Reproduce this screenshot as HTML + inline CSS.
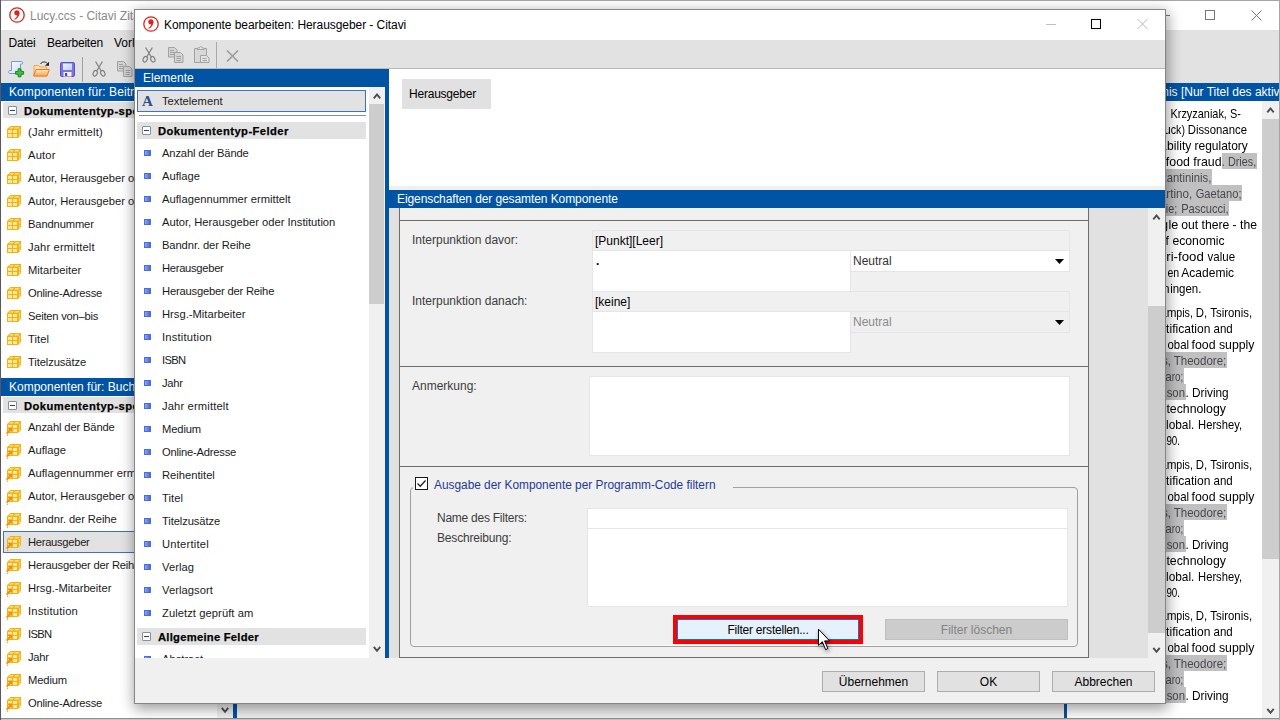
<!DOCTYPE html>
<html lang="de"><head><meta charset="utf-8"><title>Komponente bearbeiten: Herausgeber - Citavi</title>
<style>
html,body{margin:0;padding:0;}
body{width:1280px;height:720px;overflow:hidden;position:relative;background:#a6a6a6;font-family:"Liberation Sans",sans-serif;font-size:12px;color:#000;}
div,span{box-sizing:border-box;}
.a{position:absolute;white-space:nowrap;}
.t{position:absolute;white-space:nowrap;line-height:16px;height:16px;font-size:12px;}
.li{position:absolute;white-space:nowrap;font-size:11.200px;line-height:14px;height:14px;color:#1a1a1a;}
.gh{position:absolute;white-space:nowrap;font-size:11.200px;letter-spacing:.45px;font-weight:bold;line-height:14px;height:14px;color:#000;-webkit-text-stroke:.25px #000;}
.hd{position:absolute;background:#0054a3;color:#fff;font-size:12px;line-height:18px;height:18px;white-space:nowrap;overflow:hidden;}
.btn{position:absolute;border:1px solid #adadad;background:#e1e1e1;text-align:center;font-size:12px;line-height:21px;height:21px;}
.sq{position:absolute;width:7px;height:6px;background:linear-gradient(90deg,#8fa6f2,#4668dc);border:1px solid #4a6ce0;}
.exp{position:absolute;width:9px;height:9px;border:1px solid #8e8e9a;border-radius:1px;background:#fff;}
.exp i{position:absolute;left:1px;top:3px;width:5px;height:1px;background:#1c3fa0;}
</style></head><body>

<div class="a" style="left:0;top:0;width:1280px;height:1px;background:#a6a6a6"></div>
<div class="a" style="left:0;top:718px;width:1280px;height:1px;background:#8f8f8f"></div>
<div class="a" style="left:0;top:719px;width:1280px;height:1px;background:#c8c8c8"></div>
<div class="a" style="left:0;top:0;width:1px;height:720px;background:#5a5560"></div>
<div class="a" style="left:1279px;top:0;width:1px;height:720px;background:#a6a6a6"></div>
<div id="main" class="a" style="left:1px;top:1px;width:1278px;height:717px;background:#f0f0f0;overflow:hidden">
<div class="a" style="left:0;top:0;width:1278px;height:29px;background:#fff"></div>
<svg class="a" style="left:8px;top:6px" width="16" height="16" viewBox="0 0 16 16"><circle cx="8" cy="8" r="7.200" fill="#fff" stroke="#d9261c" stroke-width="1.300"/><circle cx="7.900" cy="5.800" r="2.600" fill="#d9261c"/><path d="M10.500 5.800C10.600 9.200 8.400 11.700 5.600 12.800L5.200 12.100C6.800 11.200 7.900 10 8.200 8.300Z" fill="#d9261c"/></svg>
<div class="t" style="left:29px;top:7px;font-size:12px;color:#8a8a8a">Lucy.ccs - Citavi Zitationsstil-Editor</div>
<svg class="a" style="left:1195px;top:4px" width="80" height="20" viewBox="0 0 80 20"><rect x="9.500" y="5.500" width="9" height="9" fill="none" stroke="#777" stroke-width="1"/><path d="M55.500 5.500l10 10M65.500 5.500l-10 10" stroke="#777" stroke-width="1" fill="none"/></svg>
<div class="a" style="left:1159px;top:14px;width:10px;height:1px;background:#777"></div>
<div class="a" style="left:0;top:29px;width:1278px;height:53px;background:#e2e2e2"></div>
<div class="t" style="left:7.500px;top:34px;letter-spacing:-.2px">Datei</div>
<div class="t" style="left:46px;top:34px;letter-spacing:-.22px">Bearbeiten</div>
<div class="t" style="left:113px;top:34px;">Vorlagen</div>
<svg class="a" style="left:6px;top:59px" width="18" height="18" viewBox="0 0 18 18"><defs><linearGradient id="gd" x1="0" y1="0" x2="1" y2="1"><stop offset="0" stop-color="#ffffff"/><stop offset="1" stop-color="#c4d8f6"/></linearGradient></defs><path d="M4.500 1.500H14.500c1.600 0 1.600 2.600 0 2.600H13.500V13.500H3c-2 0-2-3 0-3H4.500Z" fill="url(#gd)" stroke="#7d98c8" stroke-width="1"/><path d="M11.200 8.800h2.800v2.600h2.600v2.800h-2.600v2.600h-2.800v-2.600h-2.600v-2.800h2.600z" fill="#3ec43e" stroke="#0b7a12" stroke-width=".9"/></svg><svg class="a" style="left:31px;top:59px" width="19" height="18" viewBox="0 0 19 18"><defs><linearGradient id="gf" x1="0" y1="0" x2="0" y2="1"><stop offset="0" stop-color="#ffe6c0"/><stop offset="1" stop-color="#ffa848"/></linearGradient></defs><path d="M2 5.500h4.500l1.500 1.500h6.500v9h-12.500z" fill="#ffe2b8" stroke="#f6a040" stroke-width="1"/><path d="M1.700 16l2.300-6.500h13.300l-2.300 6.500z" fill="url(#gf)" stroke="#f0782c" stroke-width="1"/><path d="M8.500 4c1.500-2.600 5-2.800 7-.3" fill="none" stroke="#2a2a2a" stroke-width="1"/><path d="M17 1.800v4h-4z" fill="#1a1a1a"/></svg><svg class="a" style="left:57px;top:59px" width="18" height="18" viewBox="0 0 18 18"><defs><linearGradient id="gs" x1="0" y1="0" x2="1" y2="1"><stop offset="0" stop-color="#eef6ff"/><stop offset="1" stop-color="#b8d0f2"/></linearGradient></defs><rect x="2.500" y="2.500" width="14" height="14" rx="1.200" fill="#7c74e2" stroke="#5b50c6" stroke-width="1"/><rect x="5" y="3.500" width="9" height="6.500" fill="url(#gs)"/><rect x="5.500" y="12" width="8" height="4.500" fill="#f2f2f8"/><rect x="7" y="13" width="2.200" height="3" fill="#4a44a8"/></svg><div class="a" style="left:81px;top:56px;width:1px;height:25px;background:#a0a0a0"></div><svg class="a" style="left:91px;top:60px" width="14" height="16" viewBox="0 0 14 16"><path d="M3.600 0.500L9.400 10.200M10.400 0.500L4.600 10.200" stroke="#828282" stroke-width="1.250" fill="none"/><ellipse cx="3.200" cy="12.300" rx="2" ry="2.900" transform="rotate(24 3.200 12.300)" fill="none" stroke="#828282" stroke-width="1.250"/><ellipse cx="10.800" cy="12.300" rx="2" ry="2.900" transform="rotate(-24 10.800 12.300)" fill="none" stroke="#828282" stroke-width="1.250"/></svg><svg class="a" style="left:115px;top:59px" width="18" height="18" viewBox="0 0 18 18"><path d="M1.500 1.500h6l2.500 2.500v7h-8.500z" fill="#d4d4d4" stroke="#a2a2a2" stroke-width="1"/><path d="M3 4.500h4M3 6.500h5M3 8.500h5" stroke="#a2a2a2" stroke-width="1"/><path d="M7.500 6.500h6l2.500 2.500v7.500h-8.500z" fill="#d4d4d4" stroke="#a2a2a2" stroke-width="1"/><path d="M9.500 10.500h4.500M9.500 12.500h4.500M9.500 14.500h4.500" stroke="#a2a2a2" stroke-width="1"/></svg>
<div class="hd" style="left:0;top:82px;width:232px;padding-left:8px;letter-spacing:.08px">Komponenten für: Beitrag in ...</div>
<div class="a" style="left:0;top:100px;width:232px;height:617px;background:#fff"></div>
<div class="a" style="left:2px;top:101px;width:214px;height:16px;background:#e2e2e2"></div><div class="exp" style="left:7px;top:105px"><i></i></div><div class="gh" style="left:23px;top:103px">Dokumententyp-spezifische Felder</div><svg class="a" style="left:5px;top:124px" width="16" height="16" viewBox="0 0 16 16"><path d="M1 4.300L4.300 1H15V10L12 13H1Z" fill="#f2b30e"/><path d="M2 5h4v3h-4zM7 5h4v3h-4zM2 9h4v3h-4zM7 9h4v3h-4z" fill="#fde7a4"/><path d="M4.200 2.200H7.900L6.700 3.500H3ZM9.200 2.200H13.600L12.400 3.500H8Z" fill="#fde7a4"/><path d="M12.900 4.700L14.200 3.300V6.600L12.900 8ZM12.900 9L14.200 7.600V10L12.900 11.400Z" fill="#fbd873"/></svg><div class="li" style="left:27px;top:124px;letter-spacing:0.169px">(Jahr ermittelt)</div><svg class="a" style="left:5px;top:147px" width="16" height="16" viewBox="0 0 16 16"><path d="M1 4.300L4.300 1H15V10L12 13H1Z" fill="#f2b30e"/><path d="M2 5h4v3h-4zM7 5h4v3h-4zM2 9h4v3h-4zM7 9h4v3h-4z" fill="#fde7a4"/><path d="M4.200 2.200H7.900L6.700 3.500H3ZM9.200 2.200H13.600L12.400 3.500H8Z" fill="#fde7a4"/><path d="M12.900 4.700L14.200 3.300V6.600L12.900 8ZM12.900 9L14.200 7.600V10L12.900 11.400Z" fill="#fbd873"/></svg><div class="li" style="left:27px;top:147px;letter-spacing:0.166px">Autor</div><svg class="a" style="left:5px;top:170px" width="16" height="16" viewBox="0 0 16 16"><path d="M1 4.300L4.300 1H15V10L12 13H1Z" fill="#f2b30e"/><path d="M2 5h4v3h-4zM7 5h4v3h-4zM2 9h4v3h-4zM7 9h4v3h-4z" fill="#fde7a4"/><path d="M4.200 2.200H7.900L6.700 3.500H3ZM9.200 2.200H13.600L12.400 3.500H8Z" fill="#fde7a4"/><path d="M12.900 4.700L14.200 3.300V6.600L12.900 8ZM12.900 9L14.200 7.600V10L12.900 11.400Z" fill="#fbd873"/></svg><div class="li" style="left:27px;top:170px;letter-spacing:-0.006px">Autor, Herausgeber oder Institution</div><svg class="a" style="left:5px;top:193px" width="16" height="16" viewBox="0 0 16 16"><path d="M1 4.300L4.300 1H15V10L12 13H1Z" fill="#f2b30e"/><path d="M2 5h4v3h-4zM7 5h4v3h-4zM2 9h4v3h-4zM7 9h4v3h-4z" fill="#fde7a4"/><path d="M4.200 2.200H7.900L6.700 3.500H3ZM9.200 2.200H13.600L12.400 3.500H8Z" fill="#fde7a4"/><path d="M12.900 4.700L14.200 3.300V6.600L12.900 8ZM12.900 9L14.200 7.600V10L12.900 11.400Z" fill="#fbd873"/></svg><div class="li" style="left:27px;top:193px;letter-spacing:-0.006px">Autor, Herausgeber oder Institution</div><svg class="a" style="left:5px;top:216px" width="16" height="16" viewBox="0 0 16 16"><path d="M1 4.300L4.300 1H15V10L12 13H1Z" fill="#f2b30e"/><path d="M2 5h4v3h-4zM7 5h4v3h-4zM2 9h4v3h-4zM7 9h4v3h-4z" fill="#fde7a4"/><path d="M4.200 2.200H7.900L6.700 3.500H3ZM9.200 2.200H13.600L12.400 3.500H8Z" fill="#fde7a4"/><path d="M12.900 4.700L14.200 3.300V6.600L12.900 8ZM12.900 9L14.200 7.600V10L12.900 11.400Z" fill="#fbd873"/></svg><div class="li" style="left:27px;top:216px;letter-spacing:-0.144px">Bandnummer</div><svg class="a" style="left:5px;top:239px" width="16" height="16" viewBox="0 0 16 16"><path d="M1 4.300L4.300 1H15V10L12 13H1Z" fill="#f2b30e"/><path d="M2 5h4v3h-4zM7 5h4v3h-4zM2 9h4v3h-4zM7 9h4v3h-4z" fill="#fde7a4"/><path d="M4.200 2.200H7.900L6.700 3.500H3ZM9.200 2.200H13.600L12.400 3.500H8Z" fill="#fde7a4"/><path d="M12.900 4.700L14.200 3.300V6.600L12.900 8ZM12.900 9L14.200 7.600V10L12.900 11.400Z" fill="#fbd873"/></svg><div class="li" style="left:27px;top:239px;letter-spacing:0.147px">Jahr ermittelt</div><svg class="a" style="left:5px;top:262px" width="16" height="16" viewBox="0 0 16 16"><path d="M1 4.300L4.300 1H15V10L12 13H1Z" fill="#f2b30e"/><path d="M2 5h4v3h-4zM7 5h4v3h-4zM2 9h4v3h-4zM7 9h4v3h-4z" fill="#fde7a4"/><path d="M4.200 2.200H7.900L6.700 3.500H3ZM9.200 2.200H13.600L12.400 3.500H8Z" fill="#fde7a4"/><path d="M12.900 4.700L14.200 3.300V6.600L12.900 8ZM12.900 9L14.200 7.600V10L12.900 11.400Z" fill="#fbd873"/></svg><div class="li" style="left:27px;top:262px;letter-spacing:0.035px">Mitarbeiter</div><svg class="a" style="left:5px;top:285px" width="16" height="16" viewBox="0 0 16 16"><path d="M1 4.300L4.300 1H15V10L12 13H1Z" fill="#f2b30e"/><path d="M2 5h4v3h-4zM7 5h4v3h-4zM2 9h4v3h-4zM7 9h4v3h-4z" fill="#fde7a4"/><path d="M4.200 2.200H7.900L6.700 3.500H3ZM9.200 2.200H13.600L12.400 3.500H8Z" fill="#fde7a4"/><path d="M12.900 4.700L14.200 3.300V6.600L12.900 8ZM12.900 9L14.200 7.600V10L12.900 11.400Z" fill="#fbd873"/></svg><div class="li" style="left:27px;top:285px;letter-spacing:-0.214px">Online-Adresse</div><svg class="a" style="left:5px;top:308px" width="16" height="16" viewBox="0 0 16 16"><path d="M1 4.300L4.300 1H15V10L12 13H1Z" fill="#f2b30e"/><path d="M2 5h4v3h-4zM7 5h4v3h-4zM2 9h4v3h-4zM7 9h4v3h-4z" fill="#fde7a4"/><path d="M4.200 2.200H7.900L6.700 3.500H3ZM9.200 2.200H13.600L12.400 3.500H8Z" fill="#fde7a4"/><path d="M12.900 4.700L14.200 3.300V6.600L12.900 8ZM12.900 9L14.200 7.600V10L12.900 11.400Z" fill="#fbd873"/></svg><div class="li" style="left:27px;top:308px;letter-spacing:-0.227px">Seiten von–bis</div><svg class="a" style="left:5px;top:331px" width="16" height="16" viewBox="0 0 16 16"><path d="M1 4.300L4.300 1H15V10L12 13H1Z" fill="#f2b30e"/><path d="M2 5h4v3h-4zM7 5h4v3h-4zM2 9h4v3h-4zM7 9h4v3h-4z" fill="#fde7a4"/><path d="M4.200 2.200H7.900L6.700 3.500H3ZM9.200 2.200H13.600L12.400 3.500H8Z" fill="#fde7a4"/><path d="M12.900 4.700L14.200 3.300V6.600L12.900 8ZM12.900 9L14.200 7.600V10L12.900 11.400Z" fill="#fbd873"/></svg><div class="li" style="left:27px;top:331px;letter-spacing:0.071px">Titel</div><svg class="a" style="left:5px;top:354px" width="16" height="16" viewBox="0 0 16 16"><path d="M1 4.300L4.300 1H15V10L12 13H1Z" fill="#f2b30e"/><path d="M2 5h4v3h-4zM7 5h4v3h-4zM2 9h4v3h-4zM7 9h4v3h-4z" fill="#fde7a4"/><path d="M4.200 2.200H7.900L6.700 3.500H3ZM9.200 2.200H13.600L12.400 3.500H8Z" fill="#fde7a4"/><path d="M12.900 4.700L14.200 3.300V6.600L12.900 8ZM12.900 9L14.200 7.600V10L12.900 11.400Z" fill="#fbd873"/></svg><div class="li" style="left:27px;top:354px;letter-spacing:-0.096px">Titelzusätze</div><div class="hd" style="left:0;top:377px;width:232px;padding-left:8px">Komponenten für: Buch (Sammelwerk)</div><div class="a" style="left:2px;top:396px;width:214px;height:16px;background:#e2e2e2"></div><div class="exp" style="left:7px;top:400px"><i></i></div><div class="gh" style="left:23px;top:398px">Dokumententyp-spezifische Felder</div><svg class="a" style="left:5px;top:419px" width="16" height="16" viewBox="0 0 16 16"><path d="M1 4.300L4.300 1H15V10L12 13H1Z" fill="#f2b30e"/><path d="M2 5h4v3h-4zM7 5h4v3h-4zM2 9h4v3h-4zM7 9h4v3h-4z" fill="#fde7a4"/><path d="M4.200 2.200H7.900L6.700 3.500H3ZM9.200 2.200H13.600L12.400 3.500H8Z" fill="#fde7a4"/><path d="M12.900 4.700L14.200 3.300V6.600L12.900 8ZM12.900 9L14.200 7.600V10L12.900 11.400Z" fill="#fbd873"/><path d="M1.500 7.500H6V12L4.700 10.800L1.300 14.300L0 13L3.200 9.400Z" fill="#ff8a00"/><rect x="1" y="14.600" width="1.200" height="1.200" fill="#ff8a00"/></svg><div class="li" style="left:27px;top:419px;letter-spacing:-0.141px">Anzahl der Bände</div><svg class="a" style="left:5px;top:442px" width="16" height="16" viewBox="0 0 16 16"><path d="M1 4.300L4.300 1H15V10L12 13H1Z" fill="#f2b30e"/><path d="M2 5h4v3h-4zM7 5h4v3h-4zM2 9h4v3h-4zM7 9h4v3h-4z" fill="#fde7a4"/><path d="M4.200 2.200H7.900L6.700 3.500H3ZM9.200 2.200H13.600L12.400 3.500H8Z" fill="#fde7a4"/><path d="M12.900 4.700L14.200 3.300V6.600L12.900 8ZM12.900 9L14.200 7.600V10L12.900 11.400Z" fill="#fbd873"/><path d="M1.500 7.500H6V12L4.700 10.800L1.300 14.300L0 13L3.200 9.400Z" fill="#ff8a00"/><rect x="1" y="14.600" width="1.200" height="1.200" fill="#ff8a00"/></svg><div class="li" style="left:27px;top:442px;letter-spacing:0.001px">Auflage</div><svg class="a" style="left:5px;top:465px" width="16" height="16" viewBox="0 0 16 16"><path d="M1 4.300L4.300 1H15V10L12 13H1Z" fill="#f2b30e"/><path d="M2 5h4v3h-4zM7 5h4v3h-4zM2 9h4v3h-4zM7 9h4v3h-4z" fill="#fde7a4"/><path d="M4.200 2.200H7.900L6.700 3.500H3ZM9.200 2.200H13.600L12.400 3.500H8Z" fill="#fde7a4"/><path d="M12.900 4.700L14.200 3.300V6.600L12.900 8ZM12.900 9L14.200 7.600V10L12.900 11.400Z" fill="#fbd873"/><path d="M1.500 7.500H6V12L4.700 10.800L1.300 14.300L0 13L3.200 9.400Z" fill="#ff8a00"/><rect x="1" y="14.600" width="1.200" height="1.200" fill="#ff8a00"/></svg><div class="li" style="left:27px;top:465px;letter-spacing:0.027px">Auflagennummer ermittelt</div><svg class="a" style="left:5px;top:488px" width="16" height="16" viewBox="0 0 16 16"><path d="M1 4.300L4.300 1H15V10L12 13H1Z" fill="#f2b30e"/><path d="M2 5h4v3h-4zM7 5h4v3h-4zM2 9h4v3h-4zM7 9h4v3h-4z" fill="#fde7a4"/><path d="M4.200 2.200H7.900L6.700 3.500H3ZM9.200 2.200H13.600L12.400 3.500H8Z" fill="#fde7a4"/><path d="M12.900 4.700L14.200 3.300V6.600L12.900 8ZM12.900 9L14.200 7.600V10L12.900 11.400Z" fill="#fbd873"/><path d="M1.500 7.500H6V12L4.700 10.800L1.300 14.300L0 13L3.200 9.400Z" fill="#ff8a00"/><rect x="1" y="14.600" width="1.200" height="1.200" fill="#ff8a00"/></svg><div class="li" style="left:27px;top:488px;letter-spacing:-0.006px">Autor, Herausgeber oder Institution</div><svg class="a" style="left:5px;top:511px" width="16" height="16" viewBox="0 0 16 16"><path d="M1 4.300L4.300 1H15V10L12 13H1Z" fill="#f2b30e"/><path d="M2 5h4v3h-4zM7 5h4v3h-4zM2 9h4v3h-4zM7 9h4v3h-4z" fill="#fde7a4"/><path d="M4.200 2.200H7.900L6.700 3.500H3ZM9.200 2.200H13.600L12.400 3.500H8Z" fill="#fde7a4"/><path d="M12.900 4.700L14.200 3.300V6.600L12.900 8ZM12.900 9L14.200 7.600V10L12.900 11.400Z" fill="#fbd873"/><path d="M1.500 7.500H6V12L4.700 10.800L1.300 14.300L0 13L3.200 9.400Z" fill="#ff8a00"/><rect x="1" y="14.600" width="1.200" height="1.200" fill="#ff8a00"/></svg><div class="li" style="left:27px;top:511px;letter-spacing:-0.094px">Bandnr. der Reihe</div><div class="a" style="left:2px;top:530px;width:214px;height:22px;background:#e2e2e2;border:1px solid #3c6fd0"></div><svg class="a" style="left:5px;top:534px" width="16" height="16" viewBox="0 0 16 16"><path d="M1 4.300L4.300 1H15V10L12 13H1Z" fill="#f2b30e"/><path d="M2 5h4v3h-4zM7 5h4v3h-4zM2 9h4v3h-4zM7 9h4v3h-4z" fill="#fde7a4"/><path d="M4.200 2.200H7.900L6.700 3.500H3ZM9.200 2.200H13.600L12.400 3.500H8Z" fill="#fde7a4"/><path d="M12.900 4.700L14.200 3.300V6.600L12.900 8ZM12.900 9L14.200 7.600V10L12.900 11.400Z" fill="#fbd873"/><path d="M1.500 7.500H6V12L4.700 10.800L1.300 14.300L0 13L3.200 9.400Z" fill="#ff8a00"/><rect x="1" y="14.600" width="1.200" height="1.200" fill="#ff8a00"/></svg><div class="li" style="left:27px;top:534px;letter-spacing:-0.287px">Herausgeber</div><svg class="a" style="left:5px;top:557px" width="16" height="16" viewBox="0 0 16 16"><path d="M1 4.300L4.300 1H15V10L12 13H1Z" fill="#f2b30e"/><path d="M2 5h4v3h-4zM7 5h4v3h-4zM2 9h4v3h-4zM7 9h4v3h-4z" fill="#fde7a4"/><path d="M4.200 2.200H7.900L6.700 3.500H3ZM9.200 2.200H13.600L12.400 3.500H8Z" fill="#fde7a4"/><path d="M12.900 4.700L14.200 3.300V6.600L12.900 8ZM12.900 9L14.200 7.600V10L12.900 11.400Z" fill="#fbd873"/><path d="M1.500 7.500H6V12L4.700 10.800L1.300 14.300L0 13L3.200 9.400Z" fill="#ff8a00"/><rect x="1" y="14.600" width="1.200" height="1.200" fill="#ff8a00"/></svg><div class="li" style="left:27px;top:557px;letter-spacing:-0.197px">Herausgeber der Reihe</div><svg class="a" style="left:5px;top:580px" width="16" height="16" viewBox="0 0 16 16"><path d="M1 4.300L4.300 1H15V10L12 13H1Z" fill="#f2b30e"/><path d="M2 5h4v3h-4zM7 5h4v3h-4zM2 9h4v3h-4zM7 9h4v3h-4z" fill="#fde7a4"/><path d="M4.200 2.200H7.900L6.700 3.500H3ZM9.200 2.200H13.600L12.400 3.500H8Z" fill="#fde7a4"/><path d="M12.900 4.700L14.200 3.300V6.600L12.900 8ZM12.900 9L14.200 7.600V10L12.900 11.400Z" fill="#fbd873"/><path d="M1.500 7.500H6V12L4.700 10.800L1.300 14.300L0 13L3.200 9.400Z" fill="#ff8a00"/><rect x="1" y="14.600" width="1.200" height="1.200" fill="#ff8a00"/></svg><div class="li" style="left:27px;top:580px;letter-spacing:0.006px">Hrsg.-Mitarbeiter</div><svg class="a" style="left:5px;top:603px" width="16" height="16" viewBox="0 0 16 16"><path d="M1 4.300L4.300 1H15V10L12 13H1Z" fill="#f2b30e"/><path d="M2 5h4v3h-4zM7 5h4v3h-4zM2 9h4v3h-4zM7 9h4v3h-4z" fill="#fde7a4"/><path d="M4.200 2.200H7.900L6.700 3.500H3ZM9.200 2.200H13.600L12.400 3.500H8Z" fill="#fde7a4"/><path d="M12.900 4.700L14.200 3.300V6.600L12.900 8ZM12.900 9L14.200 7.600V10L12.900 11.400Z" fill="#fbd873"/><path d="M1.500 7.500H6V12L4.700 10.800L1.300 14.300L0 13L3.200 9.400Z" fill="#ff8a00"/><rect x="1" y="14.600" width="1.200" height="1.200" fill="#ff8a00"/></svg><div class="li" style="left:27px;top:603px;letter-spacing:0.196px">Institution</div><svg class="a" style="left:5px;top:626px" width="16" height="16" viewBox="0 0 16 16"><path d="M1 4.300L4.300 1H15V10L12 13H1Z" fill="#f2b30e"/><path d="M2 5h4v3h-4zM7 5h4v3h-4zM2 9h4v3h-4zM7 9h4v3h-4z" fill="#fde7a4"/><path d="M4.200 2.200H7.900L6.700 3.500H3ZM9.200 2.200H13.600L12.400 3.500H8Z" fill="#fde7a4"/><path d="M12.900 4.700L14.200 3.300V6.600L12.900 8ZM12.900 9L14.200 7.600V10L12.900 11.400Z" fill="#fbd873"/><path d="M1.500 7.500H6V12L4.700 10.800L1.300 14.300L0 13L3.200 9.400Z" fill="#ff8a00"/><rect x="1" y="14.600" width="1.200" height="1.200" fill="#ff8a00"/></svg><div class="li" style="left:27px;top:626px;letter-spacing:-0.636px">ISBN</div><svg class="a" style="left:5px;top:649px" width="16" height="16" viewBox="0 0 16 16"><path d="M1 4.300L4.300 1H15V10L12 13H1Z" fill="#f2b30e"/><path d="M2 5h4v3h-4zM7 5h4v3h-4zM2 9h4v3h-4zM7 9h4v3h-4z" fill="#fde7a4"/><path d="M4.200 2.200H7.900L6.700 3.500H3ZM9.200 2.200H13.600L12.400 3.500H8Z" fill="#fde7a4"/><path d="M12.900 4.700L14.200 3.300V6.600L12.900 8ZM12.900 9L14.200 7.600V10L12.900 11.400Z" fill="#fbd873"/><path d="M1.500 7.500H6V12L4.700 10.800L1.300 14.300L0 13L3.200 9.400Z" fill="#ff8a00"/><rect x="1" y="14.600" width="1.200" height="1.200" fill="#ff8a00"/></svg><div class="li" style="left:27px;top:649px;letter-spacing:-0.297px">Jahr</div><svg class="a" style="left:5px;top:672px" width="16" height="16" viewBox="0 0 16 16"><path d="M1 4.300L4.300 1H15V10L12 13H1Z" fill="#f2b30e"/><path d="M2 5h4v3h-4zM7 5h4v3h-4zM2 9h4v3h-4zM7 9h4v3h-4z" fill="#fde7a4"/><path d="M4.200 2.200H7.900L6.700 3.500H3ZM9.200 2.200H13.600L12.400 3.500H8Z" fill="#fde7a4"/><path d="M12.900 4.700L14.200 3.300V6.600L12.900 8ZM12.900 9L14.200 7.600V10L12.900 11.400Z" fill="#fbd873"/><path d="M1.500 7.500H6V12L4.700 10.800L1.300 14.300L0 13L3.200 9.400Z" fill="#ff8a00"/><rect x="1" y="14.600" width="1.200" height="1.200" fill="#ff8a00"/></svg><div class="li" style="left:27px;top:672px;letter-spacing:-0.123px">Medium</div><svg class="a" style="left:5px;top:695px" width="16" height="16" viewBox="0 0 16 16"><path d="M1 4.300L4.300 1H15V10L12 13H1Z" fill="#f2b30e"/><path d="M2 5h4v3h-4zM7 5h4v3h-4zM2 9h4v3h-4zM7 9h4v3h-4z" fill="#fde7a4"/><path d="M4.200 2.200H7.900L6.700 3.500H3ZM9.200 2.200H13.600L12.400 3.500H8Z" fill="#fde7a4"/><path d="M12.900 4.700L14.200 3.300V6.600L12.900 8ZM12.900 9L14.200 7.600V10L12.900 11.400Z" fill="#fbd873"/><path d="M1.500 7.500H6V12L4.700 10.800L1.300 14.300L0 13L3.200 9.400Z" fill="#ff8a00"/><rect x="1" y="14.600" width="1.200" height="1.200" fill="#ff8a00"/></svg><div class="li" style="left:27px;top:695px;letter-spacing:-0.214px">Online-Adresse</div>
<div class="a" style="left:216px;top:100px;width:16px;height:617px;background:#f0f0f0"></div>
<svg class="a" style="left:216px;top:701px" width="16" height="16" viewBox="0 0 16 16"><path d="M4.800 5.800L8 9.800L11.200 5.800" fill="none" stroke="#4d4d4d" stroke-width="1.900"/></svg>
<div class="a" style="left:232px;top:82px;width:4px;height:635px;background:#0054a3"></div>
<div class="a" style="left:1063px;top:82px;width:4px;height:635px;background:#0054a3"></div>
<div class="hd" style="left:1067px;top:82px;width:211px;"><span style="position:absolute;left:5.500px;top:0">Literaturverzeichnis [Nur Titel des aktiven Dokumententyps]</span></div>
<div class="a" style="left:1066px;top:100px;width:195px;height:617px;background:#fff"></div><div class="a" style="right:108.80px;top:104.5px;font-size:13px;line-height:16px;height:16px;white-space:pre;transform:scaleX(0.9000);transform-origin:100% 50%;color:#000;">Bouzembrak, Y;  </div><div class="a" style="right:38.50px;top:104.5px;font-size:13px;line-height:16px;height:16px;white-space:pre;transform:scaleX(0.8388);transform-origin:100% 50%;color:#000;">Krzyzaniak, S-</div><div class="a" style="right:108.70px;top:120.5px;font-size:13px;line-height:16px;height:16px;white-space:pre;transform:scaleX(0.9000);transform-origin:100% 50%;color:#000;">Marvin, HJP; (Lu</div><div class="a" style="right:91.50px;top:120.5px;font-size:13px;line-height:16px;height:16px;white-space:pre;transform:scaleX(0.8215);transform-origin:100% 50%;color:#000;">ck) </div><div class="a" style="right:32.30px;top:120.5px;font-size:13px;line-height:16px;height:16px;white-space:pre;transform:scaleX(0.8712);transform-origin:100% 50%;color:#000;">Dissonance</div><div class="a" style="right:112.30px;top:136.5px;font-size:13px;line-height:16px;height:16px;white-space:pre;transform:scaleX(0.9000);transform-origin:100% 50%;color:#000;">in food tracea</div><div class="a" style="right:84.80px;top:136.5px;font-size:13px;line-height:16px;height:16px;white-space:pre;transform:scaleX(0.9283);transform-origin:100% 50%;color:#000;">bility </div><div class="a" style="right:31.50px;top:136.5px;font-size:13px;line-height:16px;height:16px;white-space:pre;transform:scaleX(0.9217);transform-origin:100% 50%;color:#000;">regulatory</div><div class="a" style="left:1221.0px;top:152px;width:35.0px;height:16px;background:#c0c0c0"></div><div class="a" style="right:112.70px;top:152.5px;font-size:13px;line-height:16px;height:16px;white-space:pre;transform:scaleX(0.9000);transform-origin:100% 50%;color:#000;">compliance and </div><div class="a" style="right:57.00px;top:152.5px;font-size:13px;line-height:16px;height:16px;white-space:pre;transform:scaleX(0.9511);transform-origin:100% 50%;color:#000;">food fraud</div><div class="a" style="right:22.70px;top:152.5px;font-size:13px;line-height:16px;height:16px;white-space:pre;transform:scaleX(0.8331);transform-origin:100% 50%;color:#4a4650;">. Dries,</div><div class="a" style="left:1099.0px;top:168px;width:111.5px;height:16px;background:#c0c0c0"></div><div class="a" style="right:112.70px;top:168.5px;font-size:13px;line-height:16px;height:16px;white-space:pre;transform:scaleX(0.9000);transform-origin:100% 50%;color:#4a4650;">Liesbeth; Konst</div><div class="a" style="right:68.20px;top:168.5px;font-size:13px;line-height:16px;height:16px;white-space:pre;transform:scaleX(0.8670);transform-origin:100% 50%;color:#4a4650;">antininis,</div><div class="a" style="left:1099.0px;top:184px;width:142.0px;height:16px;background:#c0c0c0"></div><div class="a" style="right:112.70px;top:184.5px;font-size:13px;line-height:16px;height:16px;white-space:pre;transform:scaleX(0.9000);transform-origin:100% 50%;color:#4a4650;">Stefanos; Ma</div><div class="a" style="right:83.50px;top:184.5px;font-size:13px;line-height:16px;height:16px;white-space:pre;transform:scaleX(0.8980);transform-origin:100% 50%;color:#4a4650;">rtino, </div><div class="a" style="right:37.70px;top:184.5px;font-size:13px;line-height:16px;height:16px;white-space:pre;transform:scaleX(0.8561);transform-origin:100% 50%;color:#4a4650;">Gaetano;</div><div class="a" style="left:1099.0px;top:199px;width:129.0px;height:16px;background:#c0c0c0"></div><div class="a" style="right:112.70px;top:199.5px;font-size:13px;line-height:16px;height:16px;white-space:pre;transform:scaleX(0.9000);transform-origin:100% 50%;color:#4a4650;">Muradian, Rosal</div><div class="a" style="right:98.20px;top:199.5px;font-size:13px;line-height:16px;height:16px;white-space:pre;transform:scaleX(0.8360);transform-origin:100% 50%;color:#4a4650;">ie; </div><div class="a" style="right:50.70px;top:199.5px;font-size:13px;line-height:16px;height:16px;white-space:pre;transform:scaleX(0.8537);transform-origin:100% 50%;color:#4a4650;">Pascucci,</div><div class="a" style="right:111.00px;top:215.5px;font-size:13px;line-height:16px;height:16px;white-space:pre;transform:scaleX(0.9000);transform-origin:100% 50%;color:#000;">Stefano (eds.). It's a jung</div><div class="a" style="right:97.70px;top:215.5px;font-size:13px;line-height:16px;height:16px;white-space:pre;transform:scaleX(0.9684);transform-origin:100% 50%;color:#000;">le </div><div class="a" style="right:22.00px;top:215.5px;font-size:13px;line-height:16px;height:16px;white-space:pre;transform:scaleX(0.9351);transform-origin:100% 50%;color:#000;">out there - the</div><div class="a" style="right:113.20px;top:231.5px;font-size:13px;line-height:16px;height:16px;white-space:pre;transform:scaleX(0.9000);transform-origin:100% 50%;color:#000;">strange animals o</div><div class="a" style="right:106.50px;top:231.5px;font-size:13px;line-height:16px;height:16px;white-space:pre;transform:scaleX(0.9281);transform-origin:100% 50%;color:#000;">f </div><div class="a" style="right:54.30px;top:231.5px;font-size:13px;line-height:16px;height:16px;white-space:pre;transform:scaleX(0.9379);transform-origin:100% 50%;color:#000;">economic</div><div class="a" style="right:112.70px;top:247.5px;font-size:13px;line-height:16px;height:16px;white-space:pre;transform:scaleX(0.9000);transform-origin:100% 50%;color:#000;">organization in ag</div><div class="a" style="right:71.50px;top:247.5px;font-size:13px;line-height:16px;height:16px;white-space:pre;transform:scaleX(1.0181);transform-origin:100% 50%;color:#000;">ri-food </div><div class="a" style="right:44.00px;top:247.5px;font-size:13px;line-height:16px;height:16px;white-space:pre;transform:scaleX(0.8844);transform-origin:100% 50%;color:#000;">value</div><div class="a" style="right:112.00px;top:263.5px;font-size:13px;line-height:16px;height:16px;white-space:pre;transform:scaleX(0.9000);transform-origin:100% 50%;color:#000;">chains. Wagening</div><div class="a" style="right:97.30px;top:263.5px;font-size:13px;line-height:16px;height:16px;white-space:pre;transform:scaleX(0.8131);transform-origin:100% 50%;color:#000;">en </div><div class="a" style="right:44.50px;top:263.5px;font-size:13px;line-height:16px;height:16px;white-space:pre;transform:scaleX(0.9248);transform-origin:100% 50%;color:#000;">Academic</div><div class="a" style="right:109.30px;top:279.5px;font-size:13px;line-height:16px;height:16px;white-space:pre;transform:scaleX(0.9000);transform-origin:100% 50%;color:#000;">Publishers, Wagen</div><div class="a" style="right:78.00px;top:279.5px;font-size:13px;line-height:16px;height:16px;white-space:pre;transform:scaleX(0.8832);transform-origin:100% 50%;color:#000;">ingen.</div><div class="a" style="right:102.70px;top:303.5px;font-size:13px;line-height:16px;height:16px;white-space:pre;transform:scaleX(0.9000);transform-origin:100% 50%;color:#000;">Folinas, D; Manikas, I; Bechtsis, D; Lam</div><div class="a" style="right:83.20px;top:303.5px;font-size:13px;line-height:16px;height:16px;white-space:pre;transform:scaleX(0.8178);transform-origin:100% 50%;color:#000;">pis, </div><div class="a" style="right:27.00px;top:303.5px;font-size:13px;line-height:16px;height:16px;white-space:pre;transform:scaleX(0.8773);transform-origin:100% 50%;color:#000;">D, Tsironis,</div><div class="a" style="right:109.80px;top:319.5px;font-size:13px;line-height:16px;height:16px;white-space:pre;transform:scaleX(0.9000);transform-origin:100% 50%;color:#000;">L; Food quality and safety cert</div><div class="a" style="right:65.70px;top:319.5px;font-size:13px;line-height:16px;height:16px;white-space:pre;transform:scaleX(0.9245);transform-origin:100% 50%;color:#000;">ification </div><div class="a" style="right:46.50px;top:319.5px;font-size:13px;line-height:16px;height:16px;white-space:pre;transform:scaleX(0.8847);transform-origin:100% 50%;color:#000;">and</div><div class="a" style="right:112.00px;top:335.5px;font-size:13px;line-height:16px;height:16px;white-space:pre;transform:scaleX(0.9000);transform-origin:100% 50%;color:#000;">standardization in gl</div><div class="a" style="right:87.30px;top:335.5px;font-size:13px;line-height:16px;height:16px;white-space:pre;transform:scaleX(0.8758);transform-origin:100% 50%;color:#000;">obal </div><div class="a" style="right:24.30px;top:335.5px;font-size:13px;line-height:16px;height:16px;white-space:pre;transform:scaleX(0.9471);transform-origin:100% 50%;color:#000;">food supply</div><div class="a" style="left:1099.0px;top:351px;width:127.4px;height:16px;background:#c0c0c0"></div><div class="a" style="right:104.80px;top:351.5px;font-size:13px;line-height:16px;height:16px;white-space:pre;transform:scaleX(0.9000);transform-origin:100% 50%;color:#4a4650;">chains. Spyridakos, </div><div class="a" style="right:52.30px;top:351.5px;font-size:13px;line-height:16px;height:16px;white-space:pre;transform:scaleX(0.8856);transform-origin:100% 50%;color:#4a4650;">Theodore;</div><div class="a" style="left:1099.0px;top:367px;width:83.5px;height:16px;background:#c0c0c0"></div><div class="a" style="right:107.70px;top:367.5px;font-size:13px;line-height:16px;height:16px;white-space:pre;transform:scaleX(0.9000);transform-origin:100% 50%;color:#4a4650;">Ronzon, Tevecia; Alva</div><div class="a" style="right:96.20px;top:367.5px;font-size:13px;line-height:16px;height:16px;white-space:pre;transform:scaleX(0.7580);transform-origin:100% 50%;color:#4a4650;">ro;</div><div class="a" style="left:1099.0px;top:383px;width:85.7px;height:16px;background:#c0c0c0"></div><div class="a" style="right:112.30px;top:383.5px;font-size:13px;line-height:16px;height:16px;white-space:pre;transform:scaleX(0.9000);transform-origin:100% 50%;color:#4a4650;">Hud</div><div class="a" style="right:94.00px;top:383.5px;font-size:13px;line-height:16px;height:16px;white-space:pre;transform:scaleX(0.8727);transform-origin:100% 50%;color:#4a4650;">son</div><div class="a" style="right:50.70px;top:383.5px;font-size:13px;line-height:16px;height:16px;white-space:pre;transform:scaleX(0.9080);transform-origin:100% 50%;color:#000;">. Driving</div><div class="a" style="right:112.70px;top:399.5px;font-size:13px;line-height:16px;height:16px;white-space:pre;transform:scaleX(0.9000);transform-origin:100% 50%;color:#000;">agribusiness with </div><div class="a" style="right:53.20px;top:399.5px;font-size:13px;line-height:16px;height:16px;white-space:pre;transform:scaleX(0.9459);transform-origin:100% 50%;color:#000;">technology</div><div class="a" style="right:112.70px;top:415.5px;font-size:13px;line-height:16px;height:16px;white-space:pre;transform:scaleX(0.9000);transform-origin:100% 50%;color:#000;">innovations. IGI G</div><div class="a" style="right:81.00px;top:415.5px;font-size:13px;line-height:16px;height:16px;white-space:pre;transform:scaleX(0.9135);transform-origin:100% 50%;color:#000;">lobal. </div><div class="a" style="right:37.00px;top:415.5px;font-size:13px;line-height:16px;height:16px;white-space:pre;transform:scaleX(0.8617);transform-origin:100% 50%;color:#000;">Hershey,</div><div class="a" style="right:113.00px;top:431.5px;font-size:13px;line-height:16px;height:16px;white-space:pre;transform:scaleX(0.9000);transform-origin:100% 50%;color:#000;">PA. 2017. pp. 170-1</div><div class="a" style="right:99.30px;top:431.5px;font-size:13px;line-height:16px;height:16px;white-space:pre;transform:scaleX(0.7578);transform-origin:100% 50%;color:#000;">90.</div><div class="a" style="right:102.70px;top:455.5px;font-size:13px;line-height:16px;height:16px;white-space:pre;transform:scaleX(0.9000);transform-origin:100% 50%;color:#000;">Folinas, D; Manikas, I; Bechtsis, D; Lam</div><div class="a" style="right:83.20px;top:455.5px;font-size:13px;line-height:16px;height:16px;white-space:pre;transform:scaleX(0.8178);transform-origin:100% 50%;color:#000;">pis, </div><div class="a" style="right:27.00px;top:455.5px;font-size:13px;line-height:16px;height:16px;white-space:pre;transform:scaleX(0.8773);transform-origin:100% 50%;color:#000;">D, Tsironis,</div><div class="a" style="right:109.80px;top:471.5px;font-size:13px;line-height:16px;height:16px;white-space:pre;transform:scaleX(0.9000);transform-origin:100% 50%;color:#000;">L; Food quality and safety cert</div><div class="a" style="right:65.70px;top:471.5px;font-size:13px;line-height:16px;height:16px;white-space:pre;transform:scaleX(0.9245);transform-origin:100% 50%;color:#000;">ification </div><div class="a" style="right:46.50px;top:471.5px;font-size:13px;line-height:16px;height:16px;white-space:pre;transform:scaleX(0.8847);transform-origin:100% 50%;color:#000;">and</div><div class="a" style="right:112.00px;top:487.5px;font-size:13px;line-height:16px;height:16px;white-space:pre;transform:scaleX(0.9000);transform-origin:100% 50%;color:#000;">standardization in gl</div><div class="a" style="right:87.30px;top:487.5px;font-size:13px;line-height:16px;height:16px;white-space:pre;transform:scaleX(0.8758);transform-origin:100% 50%;color:#000;">obal </div><div class="a" style="right:24.30px;top:487.5px;font-size:13px;line-height:16px;height:16px;white-space:pre;transform:scaleX(0.9471);transform-origin:100% 50%;color:#000;">food supply</div><div class="a" style="left:1099.0px;top:503px;width:127.4px;height:16px;background:#c0c0c0"></div><div class="a" style="right:104.80px;top:503.5px;font-size:13px;line-height:16px;height:16px;white-space:pre;transform:scaleX(0.9000);transform-origin:100% 50%;color:#4a4650;">chains. Spyridakos, </div><div class="a" style="right:52.30px;top:503.5px;font-size:13px;line-height:16px;height:16px;white-space:pre;transform:scaleX(0.8856);transform-origin:100% 50%;color:#4a4650;">Theodore;</div><div class="a" style="left:1099.0px;top:519px;width:83.5px;height:16px;background:#c0c0c0"></div><div class="a" style="right:107.70px;top:519.5px;font-size:13px;line-height:16px;height:16px;white-space:pre;transform:scaleX(0.9000);transform-origin:100% 50%;color:#4a4650;">Ronzon, Tevecia; Alva</div><div class="a" style="right:96.20px;top:519.5px;font-size:13px;line-height:16px;height:16px;white-space:pre;transform:scaleX(0.7580);transform-origin:100% 50%;color:#4a4650;">ro;</div><div class="a" style="left:1099.0px;top:535px;width:85.7px;height:16px;background:#c0c0c0"></div><div class="a" style="right:112.30px;top:535.5px;font-size:13px;line-height:16px;height:16px;white-space:pre;transform:scaleX(0.9000);transform-origin:100% 50%;color:#4a4650;">Hud</div><div class="a" style="right:94.00px;top:535.5px;font-size:13px;line-height:16px;height:16px;white-space:pre;transform:scaleX(0.8727);transform-origin:100% 50%;color:#4a4650;">son</div><div class="a" style="right:50.70px;top:535.5px;font-size:13px;line-height:16px;height:16px;white-space:pre;transform:scaleX(0.9080);transform-origin:100% 50%;color:#000;">. Driving</div><div class="a" style="right:112.70px;top:551.5px;font-size:13px;line-height:16px;height:16px;white-space:pre;transform:scaleX(0.9000);transform-origin:100% 50%;color:#000;">agribusiness with </div><div class="a" style="right:53.20px;top:551.5px;font-size:13px;line-height:16px;height:16px;white-space:pre;transform:scaleX(0.9459);transform-origin:100% 50%;color:#000;">technology</div><div class="a" style="right:112.70px;top:567.5px;font-size:13px;line-height:16px;height:16px;white-space:pre;transform:scaleX(0.9000);transform-origin:100% 50%;color:#000;">innovations. IGI G</div><div class="a" style="right:81.00px;top:567.5px;font-size:13px;line-height:16px;height:16px;white-space:pre;transform:scaleX(0.9135);transform-origin:100% 50%;color:#000;">lobal. </div><div class="a" style="right:37.00px;top:567.5px;font-size:13px;line-height:16px;height:16px;white-space:pre;transform:scaleX(0.8617);transform-origin:100% 50%;color:#000;">Hershey,</div><div class="a" style="right:113.00px;top:583.5px;font-size:13px;line-height:16px;height:16px;white-space:pre;transform:scaleX(0.9000);transform-origin:100% 50%;color:#000;">PA. 2017. pp. 170-1</div><div class="a" style="right:99.30px;top:583.5px;font-size:13px;line-height:16px;height:16px;white-space:pre;transform:scaleX(0.7578);transform-origin:100% 50%;color:#000;">90.</div><div class="a" style="right:102.70px;top:606.5px;font-size:13px;line-height:16px;height:16px;white-space:pre;transform:scaleX(0.9000);transform-origin:100% 50%;color:#000;">Folinas, D; Manikas, I; Bechtsis, D; Lam</div><div class="a" style="right:83.20px;top:606.5px;font-size:13px;line-height:16px;height:16px;white-space:pre;transform:scaleX(0.8178);transform-origin:100% 50%;color:#000;">pis, </div><div class="a" style="right:27.00px;top:606.5px;font-size:13px;line-height:16px;height:16px;white-space:pre;transform:scaleX(0.8773);transform-origin:100% 50%;color:#000;">D, Tsironis,</div><div class="a" style="right:109.80px;top:622.5px;font-size:13px;line-height:16px;height:16px;white-space:pre;transform:scaleX(0.9000);transform-origin:100% 50%;color:#000;">L; Food quality and safety cert</div><div class="a" style="right:65.70px;top:622.5px;font-size:13px;line-height:16px;height:16px;white-space:pre;transform:scaleX(0.9245);transform-origin:100% 50%;color:#000;">ification </div><div class="a" style="right:46.50px;top:622.5px;font-size:13px;line-height:16px;height:16px;white-space:pre;transform:scaleX(0.8847);transform-origin:100% 50%;color:#000;">and</div><div class="a" style="right:112.00px;top:638.5px;font-size:13px;line-height:16px;height:16px;white-space:pre;transform:scaleX(0.9000);transform-origin:100% 50%;color:#000;">standardization in gl</div><div class="a" style="right:87.30px;top:638.5px;font-size:13px;line-height:16px;height:16px;white-space:pre;transform:scaleX(0.8758);transform-origin:100% 50%;color:#000;">obal </div><div class="a" style="right:24.30px;top:638.5px;font-size:13px;line-height:16px;height:16px;white-space:pre;transform:scaleX(0.9471);transform-origin:100% 50%;color:#000;">food supply</div><div class="a" style="left:1099.0px;top:654px;width:127.4px;height:16px;background:#c0c0c0"></div><div class="a" style="right:104.80px;top:654.5px;font-size:13px;line-height:16px;height:16px;white-space:pre;transform:scaleX(0.9000);transform-origin:100% 50%;color:#4a4650;">chains. Spyridakos, </div><div class="a" style="right:52.30px;top:654.5px;font-size:13px;line-height:16px;height:16px;white-space:pre;transform:scaleX(0.8856);transform-origin:100% 50%;color:#4a4650;">Theodore;</div><div class="a" style="left:1099.0px;top:670px;width:83.5px;height:16px;background:#c0c0c0"></div><div class="a" style="right:107.70px;top:670.5px;font-size:13px;line-height:16px;height:16px;white-space:pre;transform:scaleX(0.9000);transform-origin:100% 50%;color:#4a4650;">Ronzon, Tevecia; Alva</div><div class="a" style="right:96.20px;top:670.5px;font-size:13px;line-height:16px;height:16px;white-space:pre;transform:scaleX(0.7580);transform-origin:100% 50%;color:#4a4650;">ro;</div><div class="a" style="left:1099.0px;top:686px;width:85.7px;height:16px;background:#c0c0c0"></div><div class="a" style="right:112.30px;top:686.5px;font-size:13px;line-height:16px;height:16px;white-space:pre;transform:scaleX(0.9000);transform-origin:100% 50%;color:#4a4650;">Hud</div><div class="a" style="right:94.00px;top:686.5px;font-size:13px;line-height:16px;height:16px;white-space:pre;transform:scaleX(0.8727);transform-origin:100% 50%;color:#4a4650;">son</div><div class="a" style="right:50.70px;top:686.5px;font-size:13px;line-height:16px;height:16px;white-space:pre;transform:scaleX(0.9080);transform-origin:100% 50%;color:#000;">. Driving</div><div class="a" style="left:1261px;top:100px;width:17px;height:617px;background:#f0f0f0"></div><div class="a" style="left:1261px;top:118px;width:17px;height:440px;background:#cdcdcd"></div><svg class="a" style="left:1261px;top:100px" width="17" height="17" viewBox="0 0 17 17"><path d="M5.300 11.400L8.500 7.400L11.700 11.400" fill="none" stroke="#4d4d4d" stroke-width="1.900"/></svg><svg class="a" style="left:1261px;top:702px" width="17" height="17" viewBox="0 0 17 17"><path d="M5.300 5.800L8.500 9.800L11.700 5.800" fill="none" stroke="#4d4d4d" stroke-width="1.900"/></svg>
</div>
<div id="dlg" class="a" style="left:134px;top:9px;width:1032px;height:695px;background:#f0f0f0;border:1px solid #858585;box-shadow:1px 4px 13px 1px rgba(0,0,0,0.390)">
<div id="dl" class="a" style="left:0;top:0;width:1030px;height:693px;overflow:hidden">
<div class="a" style="left:0;top:0;width:1030px;height:30px;background:#fff"></div>
<svg class="a" style="left:8px;top:6px" width="16" height="16" viewBox="0 0 16 16"><circle cx="8" cy="8" r="7.200" fill="#fff" stroke="#d9261c" stroke-width="1.300"/><circle cx="7.900" cy="5.800" r="2.600" fill="#d9261c"/><path d="M10.500 5.800C10.600 9.200 8.400 11.700 5.600 12.800L5.200 12.100C6.800 11.200 7.900 10 8.200 8.300Z" fill="#d9261c"/></svg>
<div class="t" style="left:29px;top:7px;font-size:12px;letter-spacing:-.06px">Komponente bearbeiten: Herausgeber - Citavi</div>
<svg class="a" style="left:900px;top:0" width="130" height="30" viewBox="0 0 130 30"><path d="M11 14.500h10" stroke="#c0c0c0" stroke-width="1"/><rect x="56.500" y="9.500" width="9" height="9" fill="none" stroke="#000" stroke-width="1" shape-rendering="crispEdges"/><path d="M102.500 9l10 10M112.500 9l-10 10" stroke="#b8b8b8" stroke-width="1" fill="none"/></svg>
<div class="a" style="left:0;top:30px;width:1030px;height:29px;background:#e2e2e2"></div>
<div class="a" style="left:0;top:58px;width:1030px;height:1px;background:#b6bab6"></div>
<svg class="a" style="left:7px;top:37px" width="14" height="16" viewBox="0 0 14 16"><path d="M3.600 0.500L9.400 10.200M10.400 0.500L4.600 10.200" stroke="#828282" stroke-width="1.250" fill="none"/><ellipse cx="3.200" cy="12.300" rx="2" ry="2.900" transform="rotate(24 3.200 12.300)" fill="none" stroke="#828282" stroke-width="1.250"/><ellipse cx="10.800" cy="12.300" rx="2" ry="2.900" transform="rotate(-24 10.800 12.300)" fill="none" stroke="#828282" stroke-width="1.250"/></svg><svg class="a" style="left:32px;top:36px" width="18" height="18" viewBox="0 0 18 18"><path d="M1.500 1.500h6l2.500 2.500v7h-8.500z" fill="#d4d4d4" stroke="#a2a2a2" stroke-width="1"/><path d="M3 4.500h4M3 6.500h5M3 8.500h5" stroke="#a2a2a2" stroke-width="1"/><path d="M7.500 6.500h6l2.500 2.500v7.500h-8.500z" fill="#d4d4d4" stroke="#a2a2a2" stroke-width="1"/><path d="M9.500 10.500h4.500M9.500 12.500h4.500M9.500 14.500h4.500" stroke="#a2a2a2" stroke-width="1"/></svg><svg class="a" style="left:58px;top:36px" width="18" height="18" viewBox="0 0 18 18"><path d="M1.500 2.500h12v14h-12z" fill="#d8d8d8" stroke="#a2a2a2" stroke-width="1"/><path d="M4.500 3.500v-1.500h2c0-2 2.500-2 2.500 0h2v1.500z" fill="#e8e8e8" stroke="#a2a2a2" stroke-width="1"/><path d="M7.500 9.500h6l2.500 2.500v4.500h-8.500z" fill="#e4e4e4" stroke="#a2a2a2" stroke-width="1"/><path d="M9.500 12.500h4M9.500 14.500h4.500" stroke="#a2a2a2" stroke-width="1"/></svg><div class="a" style="left:81px;top:32px;width:1px;height:26px;background:#a8a8a8"></div><svg class="a" style="left:90px;top:38px" width="16" height="16" viewBox="0 0 16 16"><path d="M2 2.500l11 11M13 2.500l-11 11" stroke="#9a9a9a" stroke-width="1.600" fill="none"/></svg>
<div class="hd" style="left:0;top:59px;width:254px;padding-left:8px">Elemente</div>
<div class="a" style="left:250px;top:59px;width:4px;height:589px;background:#0054a3"></div>
<div class="a" style="left:0;top:77px;width:250px;height:571px;background:#fff;overflow:hidden">
<div class="a" style="left:2px;top:3px;width:229px;height:22px;background:#e2e2e2;border:1px solid #3c6fd0"></div><div class="a" style="left:7px;top:4px;font-family:'Liberation Serif',serif;font-weight:bold;font-size:15px;line-height:20px;color:#2b4f8f">A</div><div class="li" style="left:27px;top:7px;letter-spacing:0.019px">Textelement</div><div class="a" style="left:4px;top:28px;width:227px;height:1px;background:#8c8c8c"></div><div class="a" style="left:2px;top:35px;width:229px;height:17px;background:#e2e2e2"></div><div class="exp" style="left:7px;top:39px"><i></i></div><div class="gh" style="left:23px;top:37px">Dokumententyp-Felder</div><div class="sq" style="left:9px;top:63px"></div><div class="li" style="left:27px;top:59px;letter-spacing:-0.141px">Anzahl der Bände</div><div class="sq" style="left:9px;top:86px"></div><div class="li" style="left:27px;top:82px;letter-spacing:0.001px">Auflage</div><div class="sq" style="left:9px;top:109px"></div><div class="li" style="left:27px;top:105px;letter-spacing:0.027px">Auflagennummer ermittelt</div><div class="sq" style="left:9px;top:132px"></div><div class="li" style="left:27px;top:128px;letter-spacing:-0.006px">Autor, Herausgeber oder Institution</div><div class="sq" style="left:9px;top:155px"></div><div class="li" style="left:27px;top:151px;letter-spacing:-0.094px">Bandnr. der Reihe</div><div class="sq" style="left:9px;top:178px"></div><div class="li" style="left:27px;top:174px;letter-spacing:-0.287px">Herausgeber</div><div class="sq" style="left:9px;top:201px"></div><div class="li" style="left:27px;top:197px;letter-spacing:-0.197px">Herausgeber der Reihe</div><div class="sq" style="left:9px;top:224px"></div><div class="li" style="left:27px;top:220px;letter-spacing:0.006px">Hrsg.-Mitarbeiter</div><div class="sq" style="left:9px;top:247px"></div><div class="li" style="left:27px;top:243px;letter-spacing:0.196px">Institution</div><div class="sq" style="left:9px;top:270px"></div><div class="li" style="left:27px;top:266px;letter-spacing:-0.636px">ISBN</div><div class="sq" style="left:9px;top:293px"></div><div class="li" style="left:27px;top:289px;letter-spacing:-0.297px">Jahr</div><div class="sq" style="left:9px;top:316px"></div><div class="li" style="left:27px;top:312px;letter-spacing:0.147px">Jahr ermittelt</div><div class="sq" style="left:9px;top:339px"></div><div class="li" style="left:27px;top:335px;letter-spacing:-0.123px">Medium</div><div class="sq" style="left:9px;top:362px"></div><div class="li" style="left:27px;top:358px;letter-spacing:-0.214px">Online-Adresse</div><div class="sq" style="left:9px;top:385px"></div><div class="li" style="left:27px;top:381px;letter-spacing:-0.003px">Reihentitel</div><div class="sq" style="left:9px;top:408px"></div><div class="li" style="left:27px;top:404px;letter-spacing:0.071px">Titel</div><div class="sq" style="left:9px;top:431px"></div><div class="li" style="left:27px;top:427px;letter-spacing:-0.096px">Titelzusätze</div><div class="sq" style="left:9px;top:454px"></div><div class="li" style="left:27px;top:450px;letter-spacing:0.218px">Untertitel</div><div class="sq" style="left:9px;top:477px"></div><div class="li" style="left:27px;top:473px;letter-spacing:0.040px">Verlag</div><div class="sq" style="left:9px;top:500px"></div><div class="li" style="left:27px;top:496px;letter-spacing:0.057px">Verlagsort</div><div class="sq" style="left:9px;top:523px"></div><div class="li" style="left:27px;top:519px;letter-spacing:0.068px">Zuletzt geprüft am</div><div class="a" style="left:2px;top:541px;width:229px;height:17px;background:#e2e2e2"></div><div class="exp" style="left:7px;top:545px"><i></i></div><div class="gh" style="left:23px;top:543px;letter-spacing:.27px">Allgemeine Felder</div><div class="sq" style="left:9px;top:569px"></div><div class="li" style="left:27px;top:565px">Abstract</div><div class="a" style="left:234px;top:0;width:16px;height:571px;background:#f0f0f0"></div><div class="a" style="left:234px;top:17px;width:15px;height:200px;background:#cdcdcd"></div><svg class="a" style="left:234px;top:0" width="16" height="17" viewBox="0 0 16 17"><path d="M4.800 11.400L8 7.400L11.200 11.400" fill="none" stroke="#4d4d4d" stroke-width="1.900"/></svg><svg class="a" style="left:234px;top:554px" width="16" height="17" viewBox="0 0 16 17"><path d="M4.800 5.800L8 9.800L11.200 5.800" fill="none" stroke="#4d4d4d" stroke-width="1.900"/></svg>
</div>
<div class="a" style="left:254px;top:59px;width:776px;height:117px;background:#fff"></div>
<div class="a" style="left:267px;top:69px;width:89px;height:30px;background:#e1e1e1;font-size:12px;line-height:30px;padding-left:7px;letter-spacing:-.22px">Herausgeber</div>
<div class="hd" style="left:254px;top:180px;width:776px;padding-left:8px;letter-spacing:-.09px">Eigenschaften der gesamten Komponente</div>
<div class="a" style="left:254px;top:198px;width:776px;height:450px;background:#e1e1e1"></div><div class="a" style="left:264px;top:198px;width:690px;height:450px;background:#f0f0f0;border-left:1px solid #6d6d6d;border-right:1px solid #6d6d6d;border-bottom:1px solid #6d6d6d"></div><div class="a" style="left:1013px;top:198px;width:17px;height:450px;background:#f0f0f0"></div><div class="a" style="left:1013px;top:296px;width:17px;height:327px;background:#cdcdcd"></div><svg class="a" style="left:1013px;top:198px" width="17" height="17" viewBox="0 0 17 17"><path d="M5.300 11.400L8.500 7.400L11.700 11.400" fill="none" stroke="#4d4d4d" stroke-width="1.900"/></svg><svg class="a" style="left:1013px;top:632px" width="17" height="17" viewBox="0 0 17 17"><path d="M5.300 5.800L8.500 9.800L11.700 5.800" fill="none" stroke="#4d4d4d" stroke-width="1.900"/></svg><div class="a" style="left:265px;top:210px;width:688px;height:1px;background:#6d6d6d"></div><div class="a" style="left:265px;top:356px;width:688px;height:1px;background:#6d6d6d"></div><div class="a" style="left:265px;top:456px;width:688px;height:1px;background:#6d6d6d"></div><div class="t" style="left:277px;top:222px;color:#3c3c3c">Interpunktion davor:</div><div class="a" style="left:457px;top:220px;width:478px;height:21px;background:#f0f0f0;border:1px solid #e6e4e8"></div><div class="t" style="left:460px;top:223px;">[Punkt][Leer]</div><div class="a" style="left:457px;top:240px;width:259px;height:42px;background:#fff;border:1px solid #e6e4e8"></div><div class="t" style="left:461px;top:243px;font-weight:bold">.</div><div class="a" style="left:715px;top:240px;width:220px;height:22px;background:#fff;border:1px solid #e6e4e8"></div><div class="t" style="left:718px;top:243px;color:#333">Neutral</div><svg class="a" style="left:920px;top:249px" width="9" height="5" viewBox="0 0 9 5"><path d="M0 0h9l-4.500 5z" fill="#000"/></svg><div class="t" style="left:277px;top:283px;color:#3c3c3c">Interpunktion danach:</div><div class="a" style="left:457px;top:281px;width:478px;height:21px;background:#f0f0f0;border:1px solid #e6e4e8"></div><div class="t" style="left:460px;top:284px;">[keine]</div><div class="a" style="left:457px;top:301px;width:259px;height:42px;background:#fff;border:1px solid #e6e4e8"></div><div class="a" style="left:715px;top:301px;width:220px;height:22px;background:#efefef;border:1px solid #e6e4e8"></div><div class="t" style="left:718px;top:304px;color:#8a8a8a">Neutral</div><svg class="a" style="left:920px;top:310px" width="9" height="5" viewBox="0 0 9 5"><path d="M0 0h9l-4.500 5z" fill="#000"/></svg><div class="t" style="left:277px;top:368px;color:#3c3c3c">Anmerkung:</div><div class="a" style="left:454px;top:366px;width:481px;height:80px;background:#fff;border:1px solid #e6e4e8"></div><div class="a" style="left:275px;top:477px;width:668px;height:160px;border:1px solid #a0a0a0;border-radius:4px;box-shadow:inset 0 -1px 0 #fafafa"></div><div class="a" style="left:278px;top:470px;width:320px;height:14px;background:#f0f0f0"></div><div class="a" style="left:280px;top:467px;width:13px;height:13px;background:#fff;border:1px solid #1a1a1a"></div><svg class="a" style="left:280px;top:467px" width="13" height="13" viewBox="0 0 13 13"><path d="M2.500 6.500l2.800 2.800L10.500 3.500" fill="none" stroke="#222" stroke-width="1.300"/></svg><div class="t" style="left:299px;top:467px;color:#1f3a93;font-size:11.870px">Ausgabe der Komponente per Programm-Code filtern</div><div class="t" style="left:302px;top:500px;color:#3c3c3c;letter-spacing:-.25px">Name des Filters:</div><div class="a" style="left:452px;top:498px;width:481px;height:21px;background:#fff;border:1px solid #e6e4e8"></div><div class="t" style="left:302px;top:520px;color:#3c3c3c;letter-spacing:-.18px">Beschreibung:</div><div class="a" style="left:452px;top:518px;width:481px;height:79px;background:#fff;border:1px solid #e6e4e8"></div><div class="a" style="left:538px;top:605px;width:190px;height:29px;border:4px solid #ff0000"></div><div class="btn" style="left:542px;top:609px;width:182px;height:21px;line-height:21px;letter-spacing:-.22px;background:#e5f1fb;border:1px solid #0078d7">Filter erstellen...</div><div class="btn" style="left:750px;top:609px;width:183px;height:21px;line-height:21px;background:#cccccc;border:1px solid #bfbfbf;color:#838383">Filter löschen</div>
<div class="btn" style="left:687px;top:661px;width:103px">Übernehmen</div>
<div class="btn" style="left:802px;top:661px;width:103px">OK</div>
<div class="btn" style="left:917px;top:661px;width:103px">Abbrechen</div>
</div></div>
<svg class="a" style="left:817px;top:628px;filter:drop-shadow(1px 2px 2px rgba(0,0,0,.450))" width="14" height="23" viewBox="0 0 14 23"><path d="M1.500 1.200V17.300L5.300 13.700L8.600 21.600L10.900 20.600L7.600 12.900H12.600Z" fill="#fff" stroke="#000" stroke-width="1" stroke-linejoin="miter"/></svg>
</body></html>
